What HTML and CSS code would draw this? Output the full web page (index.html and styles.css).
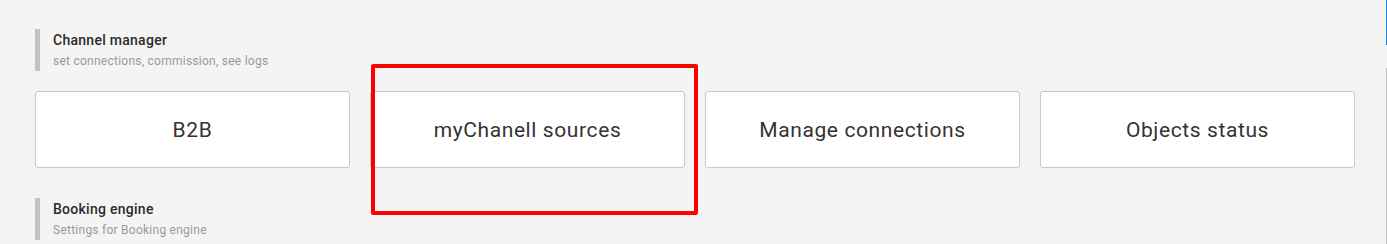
FILE: index.html
```html
<!DOCTYPE html>
<html lang="en">

<head>
  <meta charset="UTF-8">
  <meta name="viewport" content="width=device-width, initial-scale=1.0">
  <title>Settings</title>
  <link rel="stylesheet" href="styles.css">
</head>

<body>
  <div class="page">
    <div class="section-header">
      <div class="section-title">Channel manager</div>
      <div class="section-subtitle">set connections, commission, see logs</div>
    </div>

    <div class="cards">
      <a class="card" href="#">B2B</a>
      <a class="card" href="#">myChanell sources</a>
      <a class="card" href="#">Manage connections</a>
      <a class="card" href="#">Objects status</a>
    </div>

    <div class="section-header">
      <div class="section-title">Booking engine</div>
      <div class="section-subtitle">Settings for Booking engine</div>
    </div>
  </div>

  <!-- annotation frame around the selected card -->
  <div class="highlight"></div>

  <div class="edge">
    <div class="edge-active"></div>
    <div class="edge-track"></div>
  </div>
</body>

</html>
```

FILE: styles.css
```css
html,
body {
  height: 100%;
  overflow: hidden;
}

body {
  margin: 0;
  background-color: #f4f4f4;
  font-family: Roboto, 'Liberation Sans', sans-serif;
  color: #333;
}

.page {
  padding: 29px 32px 0 35px;
}

.section-header {
  border-left: 5px solid #c2c2c2;
  padding: 1px 0 1px 13px;
}

.section-title {
  font-size: 14px;
  font-weight: 500;
  line-height: 20px;
  letter-spacing: 0.27px;
  color: #2b2b2b;
}

.section-subtitle {
  margin-top: 2px;
  font-size: 12px;
  line-height: 18px;
  letter-spacing: 0.25px;
  color: #9a9a9a;
}

.cards {
  display: grid;
  grid-template-columns: repeat(4, 1fr);
  gap: 20px;
  margin: 20px 0 30px;
}

.card {
  display: flex;
  align-items: center;
  justify-content: center;
  height: 75px;
  background-color: #ffffff;
  border: 1px solid #c9c9c9;
  border-radius: 3px;
  font-size: 21px;
  letter-spacing: 0.6px;
  color: #333;
  text-decoration: none;
}

.highlight {
  position: absolute;
  left: 371px;
  top: 64px;
  width: 319px;
  height: 143px;
  border: 4px solid #ff0000;
  border-radius: 2px;
}

.edge {
  position: fixed;
  top: 0;
  right: 0;
  bottom: 0;
  width: 1px;
  display: flex;
  flex-direction: column;
}

.edge-active {
  height: 45px;
  background-color: #1e88e5;
}

.edge-track {
  flex: 1;
  margin-top: 23px;
  background-color: #bdbdbd;
}
```
